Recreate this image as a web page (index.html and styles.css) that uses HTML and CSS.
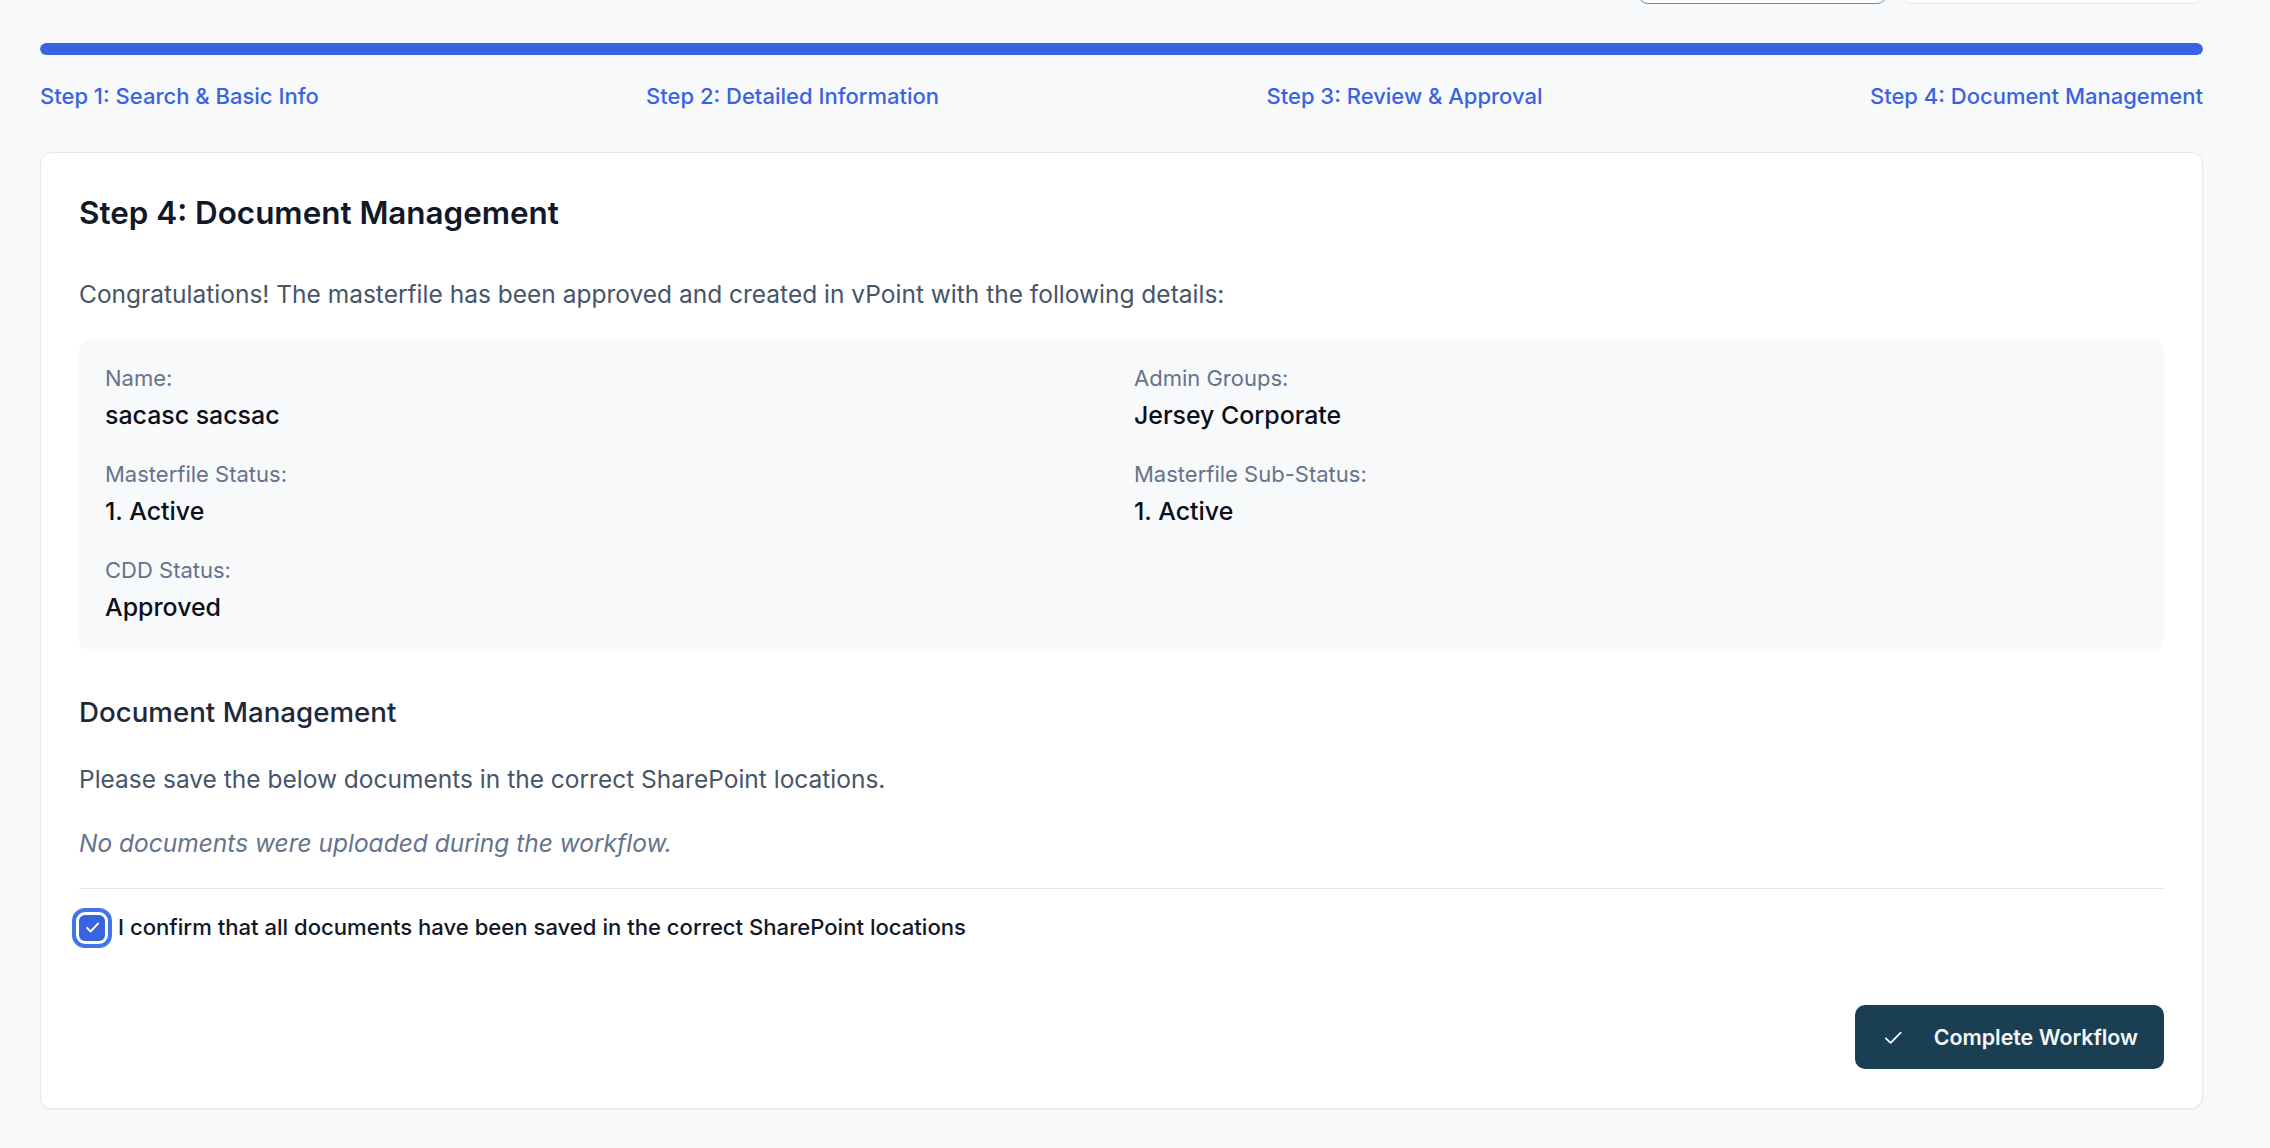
FILE: index.html
```html
<!DOCTYPE html>
<html lang="en">
<head>
<meta charset="utf-8">
<title>Step 4: Document Management</title>
<link rel="stylesheet" href="styles.css">
</head>
<body>
<div class="page">
  <div class="top-actions">
    <button class="top-btn top-btn-primary" type="button" aria-label="Save draft"></button>
    <button class="top-btn" type="button" aria-label="Cancel workflow"></button>
  </div>

  <div class="progress">
    <div class="progress-fill"></div>
  </div>
  <div class="steps">
    <span class="step">Step 1: Search &amp; Basic Info</span>
    <span class="step">Step 2: Detailed Information</span>
    <span class="step">Step 3: Review &amp; Approval</span>
    <span class="step">Step 4: Document Management</span>
  </div>

  <section class="card">
    <h2 class="card-title">Step 4: Document Management</h2>
    <p class="lead">Congratulations! The masterfile has been approved and created in vPoint with the following details:</p>

    <div class="details">
      <div class="detail">
        <div class="detail-label">Name:</div>
        <div class="detail-value">sacasc sacsac</div>
      </div>
      <div class="detail">
        <div class="detail-label">Admin Groups:</div>
        <div class="detail-value">Jersey Corporate</div>
      </div>
      <div class="detail">
        <div class="detail-label">Masterfile Status:</div>
        <div class="detail-value">1. Active</div>
      </div>
      <div class="detail">
        <div class="detail-label">Masterfile Sub-Status:</div>
        <div class="detail-value">1. Active</div>
      </div>
      <div class="detail">
        <div class="detail-label">CDD Status:</div>
        <div class="detail-value">Approved</div>
      </div>
    </div>

    <h3 class="sub-title">Document Management</h3>
    <p class="text">Please save the below documents in the correct SharePoint locations.</p>
    <p class="empty">No documents were uploaded during the workflow.</p>

    <hr class="divider">

    <label class="confirm">
      <span class="checkbox">
        <svg viewBox="0 0 16 16" width="19" height="19" aria-hidden="true">
          <path d="M3.4 8.3 L6.5 11.3 L12.7 4.7" fill="none" stroke="#ffffff" stroke-width="1.7" stroke-linecap="round" stroke-linejoin="round"/>
        </svg>
      </span>
      <span class="confirm-text">I confirm that all documents have been saved in the correct SharePoint locations</span>
    </label>

    <div class="actions">
      <button class="complete-btn" type="button">
        <svg class="complete-icon" viewBox="0 0 24 24" width="23" height="23" aria-hidden="true">
          <path d="M4 12.8 L9 17.6 L19.5 7" fill="none" stroke="#ffffff" stroke-width="1.8" stroke-linecap="round" stroke-linejoin="round"/>
        </svg>
        <span>Complete Workflow</span>
      </button>
    </div>
  </section>
</div>
</body>
</html>
```

FILE: styles.css
```css
* {
  box-sizing: border-box;
}

html, body {
  margin: 0;
  padding: 0;
}

body {
  background: #f8f9fb;
  font-family: Inter, "Noto Sans", "Liberation Sans", sans-serif;
  color: #111827;
  height: 1148px;
  overflow: hidden;
}

.page {
  width: 2163px;
  margin-left: 40px;
}

.top-actions {
  display: flex;
  justify-content: flex-end;
  gap: 14px;
  margin-top: -40px;
  height: 44px;
}

.top-btn {
  height: 44px;
  width: 302px;
  background: #ffffff;
  border: 1.5px solid #e3e6eb;
  border-radius: 10px;
}

.top-btn-primary {
  width: 249px;
  border-color: #5a86ea;
}

.progress {
  margin-top: 39px;
  height: 12px;
  background: #e5e7eb;
  border-radius: 6px;
  overflow: hidden;
}

.progress-fill {
  width: 100%;
  height: 100%;
  background: #3864e1;
  border-radius: 6px;
}

.steps {
  display: flex;
  justify-content: space-between;
  margin-top: 27px;
}

.step {
  font-size: 22px;
  line-height: 29px;
  font-weight: 500;
  color: #3864e1;
}

.card {
  margin-top: 41px;
  background: #ffffff;
  border: 1px solid #e5e8ee;
  border-radius: 12px;
  box-shadow: 0 1px 2px rgba(15, 23, 42, 0.05);
  padding: 38px;
  height: 957px;
}

.card-title {
  margin: 0;
  font-size: 31.4px;
  line-height: 44px;
  font-weight: 600;
  color: #111827;
}

.lead {
  margin: 42px 0 0;
  font-size: 24.5px;
  line-height: 35px;
  color: #475569;
}

.details {
  margin-top: 27px;
  background: #f8f9fb;
  border-radius: 12px;
  padding: 25px 26px 26px;
  display: grid;
  grid-template-columns: 1fr 1fr;
  column-gap: 25px;
  row-gap: 27px;
}

.detail-label {
  font-size: 22px;
  line-height: 29px;
  color: #64748b;
}

.detail-value {
  margin-top: 5px;
  font-size: 24.9px;
  line-height: 35px;
  font-weight: 500;
  color: #0b0f19;
}

.sub-title {
  margin: 42px 0 0;
  font-size: 27.7px;
  line-height: 38px;
  font-weight: 500;
  color: #1e293b;
}

.text {
  margin: 31px 0 0;
  font-size: 24.5px;
  line-height: 35px;
  color: #475569;
}

.empty {
  margin: 29px 0 0;
  font-size: 24.5px;
  line-height: 35px;
  font-style: italic;
  color: #64748b;
}

.divider {
  margin: 27px 0 0;
  border: 0;
  border-top: 1.5px solid #e5e7eb;
  height: 0;
}

.confirm {
  margin-top: 24px;
  display: flex;
  align-items: center;
  gap: 13px;
  height: 29px;
}

.checkbox {
  flex: none;
  width: 26px;
  height: 26px;
  border-radius: 6px;
  background: #3864e1;
  display: flex;
  align-items: center;
  justify-content: center;
  box-shadow: 0 0 0 3px #ffffff, 0 0 0 7px #4173ea;
}

.confirm-text {
  font-size: 22.1px;
  line-height: 29px;
  font-weight: 500;
  color: #111827;
}

.actions {
  display: flex;
  justify-content: flex-end;
  margin-top: 63px;
}

.complete-btn {
  display: flex;
  align-items: center;
  gap: 29px;
  height: 64px;
  padding: 0 26px 0 27px;
  background: #1b3f52;
  border: 0;
  border-radius: 10px;
  font-family: inherit;
  font-size: 21.4px;
  font-weight: 600;
  color: #f4f7fa;
}

.complete-icon {
  flex: none;
}
```
